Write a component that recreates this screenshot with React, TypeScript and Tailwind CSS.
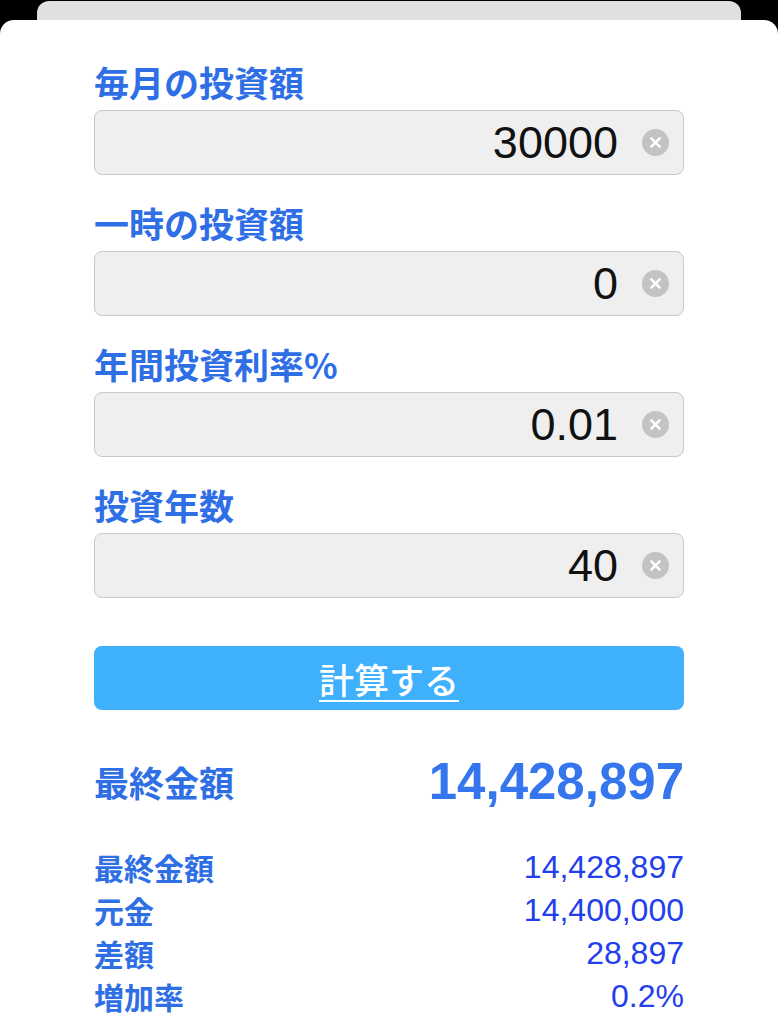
import React from "react";

const jp = { fontFamily: '"Noto Sans CJK JP", "Noto Sans", sans-serif' };
const num = { fontFamily: '"Liberation Sans", Arial, sans-serif' };

function ClearIcon() {
  return (
    <svg width="27" height="27" viewBox="0 0 26 26" className="shrink-0">
      <circle cx="13" cy="13" r="13" fill="#c3c3c3" />
      <path d="M9 9 L17 17 M17 9 L9 17" stroke="#ffffff" strokeWidth="2.4" strokeLinecap="round" />
    </svg>
  );
}

function Field({ label, value }: { label: string; value: string }) {
  return (
    <div className="flex flex-col">
      <div className="text-[35px] leading-[40px] font-bold text-[#2f6fe6] mb-[8px]" style={jp}>
        {label}
      </div>
      <div className="h-[65px] rounded-[8px] border border-[#c9c9c9] bg-[#efefef] flex items-center justify-end pr-[14px]">
        <span className="text-[45px] leading-none text-[#111111] mr-[24px]" style={num}>
          {value}
        </span>
        <ClearIcon />
      </div>
    </div>
  );
}

function Row({ label, value }: { label: string; value: string }) {
  return (
    <div className="flex items-center justify-between h-[43px]">
      <span className="text-[30px] font-bold text-[#2f6fe6] leading-none" style={jp}>
        {label}
      </span>
      <span className="text-[32px] text-[#2140ec] leading-none" style={num}>
        {value}
      </span>
    </div>
  );
}

export default function App() {
  return (
    <div className="bg-black w-[778px] h-[1024px] overflow-hidden flex flex-col pt-[1px]">
      <div className="mx-[37px] h-[19px] bg-[#e0e0e0] rounded-t-[12px] shrink-0" />
      <div className="flex-1 bg-white rounded-t-[14px] px-[94px] pt-[42px]">
        <div className="flex flex-col gap-[28px]">
          <Field label="毎月の投資額" value="30000" />
          <Field label="一時の投資額" value="0" />
          <Field label="年間投資利率%" value="0.01" />
          <Field label="投資年数" value="40" />
        </div>
        <button
          className="mt-[48px] w-full h-[64px] rounded-[8px] bg-[#3fb0fc] flex items-center justify-center"
        >
          <span className="text-white text-[35px] font-medium underline underline-offset-[6px] decoration-2 leading-none" style={jp}>
            計算する
          </span>
        </button>
        <div className="mt-[47px] h-[48px] flex items-center justify-between">
          <span className="text-[35px] font-bold text-[#2f6fe6] leading-none" style={jp}>
            最終金額
          </span>
          <span className="text-[51px] font-bold text-[#3576ee] leading-none" style={num}>
            14,428,897
          </span>
        </div>
        <div className="mt-[40px] flex flex-col">
          <Row label="最終金額" value="14,428,897" />
          <Row label="元金" value="14,400,000" />
          <Row label="差額" value="28,897" />
          <Row label="増加率" value="0.2%" />
        </div>
      </div>
    </div>
  );
}
